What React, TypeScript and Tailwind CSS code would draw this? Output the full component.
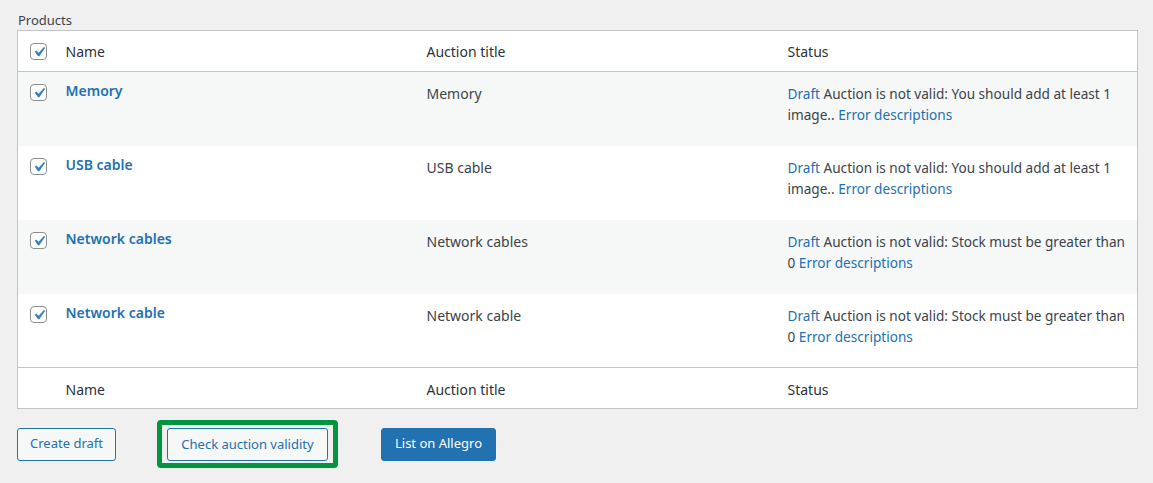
import React from 'react';

type Row = {
  name: string;
  reason: string;
  tail: string;
};

const rows: Row[] = [
  { name: 'Memory', reason: 'Auction is not valid: You should add at least 1', tail: 'image..' },
  { name: 'USB cable', reason: 'Auction is not valid: You should add at least 1', tail: 'image..' },
  { name: 'Network cables', reason: 'Auction is not valid: Stock must be greater than', tail: '0' },
  { name: 'Network cable', reason: 'Auction is not valid: Stock must be greater than', tail: '0' },
];

function Checkbox() {
  return (
    <span className="relative inline-block w-[17px] h-[17px] rounded-[4px] border border-[#8c8f94] bg-white">
      <svg
        viewBox="0 0 20 20"
        className="absolute -left-[2px] -top-[2px] w-5 h-5"
        fill="#3582c4"
      >
        <path d="M14.83 4.89l1.34.94-5.81 8.38H9.02L5.78 9.67l1.34-1.25 2.57 2.4z" />
      </svg>
    </span>
  );
}

export default function App() {
  return (
    <div
      className="min-h-screen w-full bg-[#f0f0f1] pl-[17px] pr-[15px] pt-[11px] text-[#3c434a]"
      style={{ fontFamily: '"Noto Sans", "Open Sans", sans-serif' }}
    >
      {/* Section label */}
      <div className="text-[13px] leading-[18px] mb-[1px] pl-[1px]">Products</div>

      {/* Products table */}
      <table className="w-[1121px] table-fixed border-collapse border border-[#c3c4c7] bg-white text-[14px]">
        <colgroup>
          <col className="w-[38px]" />
          <col className="w-[361px]" />
          <col className="w-[361px]" />
          <col />
        </colgroup>
        <thead>
          <tr className="h-[41px] border-b border-[#c3c4c7] text-[#2c3338]">
            <th className="pl-[12px] text-left align-middle font-normal">
              <div className="flex items-center pt-[1px]">
                <Checkbox />
              </div>
            </th>
            <th className="px-[10px] text-left font-normal">Name</th>
            <th className="px-[10px] text-left font-normal">Auction title</th>
            <th className="px-[10px] text-left font-normal">Status</th>
          </tr>
        </thead>
        <tbody>
          {rows.map((row, i) => (
            <tr key={row.name} className={`h-[74px] ${i % 2 === 0 ? 'bg-[#f6f7f7]' : 'bg-white'}`}>
              <td className="pl-[12px] pt-[12px] align-top">
                <div className="flex">
                  <Checkbox />
                </div>
              </td>
              <td className="px-[10px] pt-[8px] align-top leading-[21px]">
                <a className="font-semibold text-[#2271b1]">{row.name}</a>
              </td>
              <td className="px-[10px] pt-[11px] align-top leading-[21px]">{row.name}</td>
              <td className="pl-[10px] pt-[11px] align-top leading-[21px] text-[13.6px]">
                <div className="whitespace-nowrap">
                  <a className="text-[#2271b1]">Draft</a> {row.reason}
                </div>
                <div className="whitespace-nowrap">
                  {row.tail} <a className="text-[#2271b1]">Error descriptions</a>
                </div>
              </td>
            </tr>
          ))}
        </tbody>
        <tfoot>
          <tr className="h-[41px] border-t border-[#c3c4c7] text-[#2c3338]">
            <td />
            <td className="px-[10px] pt-[2px] align-middle">Name</td>
            <td className="px-[10px] pt-[2px] align-middle">Auction title</td>
            <td className="px-[10px] pt-[2px] align-middle">Status</td>
          </tr>
        </tfoot>
      </table>

      {/* Action buttons */}
      <div className="flex items-center mt-[11px] text-[13px]">
        <button className="w-[99px] h-[33px] rounded-[3px] border border-[#2271b1] bg-[#f6f7f7] text-[#2271b1]">
          Create draft
        </button>
        <div className="ml-[41px] rounded-[4px] border-[5px] border-[#00953f] px-[5px] pt-[3px] pb-[2px]">
          <button className="block w-[161px] h-[33px] rounded-[3px] border border-[#2271b1] bg-[#f6f7f7] text-[#2271b1]">
            Check auction validity
          </button>
        </div>
        <button className="ml-[43px] w-[115px] h-[33px] rounded-[3px] border border-[#2271b1] bg-[#2271b1] text-white">
          List on Allegro
        </button>
      </div>
    </div>
  );
}
